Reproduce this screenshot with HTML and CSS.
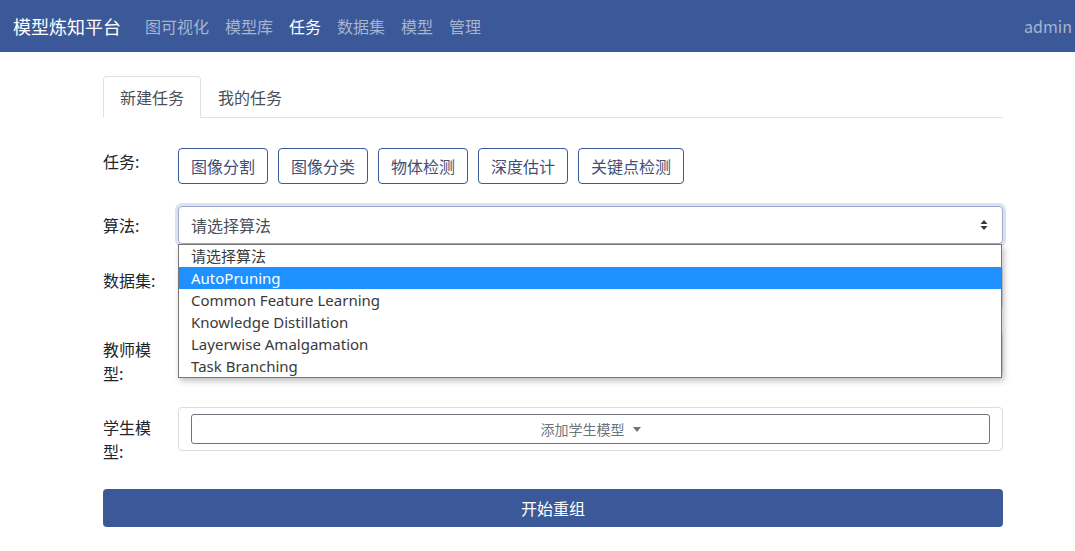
FILE: index.html
```html
<!DOCTYPE html>
<html lang="zh">
<head>
<meta charset="utf-8">
<title>模型炼知平台</title>
<link rel="stylesheet" href="styles.css">
</head>
<body>
<div class="page">
  <nav class="navbar">
    <div class="nav-left">
      <span class="brand">模型炼知平台</span>
      <a class="nav-link">图可视化</a>
      <a class="nav-link">模型库</a>
      <a class="nav-link active">任务</a>
      <a class="nav-link">数据集</a>
      <a class="nav-link">模型</a>
      <a class="nav-link">管理</a>
    </div>
    <a class="nav-link user">admin<span class="caret"></span></a>
  </nav>

  <main class="container">
    <div class="tabs">
      <div class="tab active">新建任务</div>
      <div class="tab">我的任务</div>
    </div>

    <div class="form">
      <div class="row row-task">
        <label class="label label-task">任务:</label>
        <div class="field task-buttons">
          <button class="btn-outline">图像分割</button>
          <button class="btn-outline">图像分类</button>
          <button class="btn-outline">物体检测</button>
          <button class="btn-outline">深度估计</button>
          <button class="btn-outline">关键点检测</button>
        </div>
      </div>

      <div class="row row-algo">
        <label class="label label-algo">算法:</label>
        <div class="field select-wrap">
          <div class="select">
            <span>请选择算法</span>
            <svg class="arrows" width="8" height="12" viewBox="0 0 8 12"><path d="M4 1 L7.5 5 H0.5 Z M4 11 L7.5 7 H0.5 Z" fill="#343a40"/></svg>
          </div>
          <ul class="dropdown">
            <li class="opt">请选择算法</li>
            <li class="opt selected">AutoPruning</li>
            <li class="opt">Common Feature Learning</li>
            <li class="opt">Knowledge Distillation</li>
            <li class="opt">Layerwise Amalgamation</li>
            <li class="opt">Task Branching</li>
          </ul>
        </div>
      </div>

      <div class="row row-data">
        <label class="label label-data">数据集:</label>
        <div class="field">
          <div class="box"><div class="add-btn">添加数据集<span class="caret dark"></span></div></div>
        </div>
      </div>

      <div class="row row-teacher">
        <label class="label label-teacher">教师模型:</label>
        <div class="field">
          <div class="box"><div class="add-btn">添加教师模型<span class="caret dark"></span></div></div>
        </div>
      </div>

      <div class="row row-student">
        <label class="label label-student">学生模型:</label>
        <div class="field">
          <div class="box"><div class="add-btn">添加学生模型<span class="caret dark"></span></div></div>
        </div>
      </div>

      <button class="submit">开始重组</button>
    </div>
  </main>
</div>
</body>
</html>
```

FILE: styles.css
```css
* { box-sizing: border-box; }

html, body {
  margin: 0;
  padding: 0;
  overflow: hidden;
  background: #fff;
}

body {
  font-family: "Noto Sans CJK SC", "Noto Sans", sans-serif;
  color: #212529;
  font-size: 16px;
  line-height: 24px;
}

.page {
  width: 1106px;
}

/* Navbar */
.navbar {
  height: 52px;
  background: #3b5998;
  display: flex;
  align-items: center;
  justify-content: space-between;
  padding: 0 20px 0 13px;
}

.nav-left {
  display: flex;
  align-items: center;
}

.brand {
  color: #fff;
  font-size: 18px;
  line-height: 24px;
  margin-right: 16px;
}

.nav-link {
  color: #a7b4d0;
  font-size: 16px;
  padding: 0 8px;
  line-height: 24px;
  text-decoration: none;
}

.nav-link.active { color: #fff; }

.user { display: flex; align-items: center; padding-right: 0; }

.caret {
  display: inline-block;
  width: 0;
  height: 0;
  margin-left: 6px;
  border-top: 5px solid currentColor;
  border-left: 4px solid transparent;
  border-right: 4px solid transparent;
}

.caret.dark { color: #6c757d; margin-left: 8px; vertical-align: middle; }

/* Container */
.container {
  width: 900px;
  margin: 24px auto 0;
}

.tabs {
  display: flex;
  border-bottom: 1px solid #dee2e6;
}

.tab {
  padding: 8px 16px;
  margin-bottom: -1px;
  border: 1px solid transparent;
  border-radius: 4px 4px 0 0;
  color: #495057;
  line-height: 24px;
}

.tab.active {
  border-color: #dee2e6 #dee2e6 #fff;
  background: #fff;
}

.form {
  margin-top: 30px;
}

.row {
  display: flex;
  align-items: flex-start;
}

.label {
  width: 75px;
  flex: 0 0 75px;
  padding-right: 15px;
  line-height: 24px;
  color: #212529;
}

.field {
  flex: 1;
  min-width: 0;
}

.row-task { margin-bottom: 22px; }
.label-task { padding-top: 1px; }

.task-buttons {
  display: flex;
  gap: 10px;
}

.btn-outline {
  font-family: inherit;
  font-size: 16px;
  line-height: 24px;
  height: 36px;
  padding: 5px 12px;
  background: #fff;
  border: 1px solid #3b5998;
  border-radius: 4px;
  color: #3f5077;
}

.row-algo { margin-bottom: 22px; align-items: center; }

.select-wrap { position: relative; }

.select {
  height: 38px;
  border: 1px solid #9aaad0;
  border-radius: 4px;
  box-shadow: 0 0 0 3px rgba(59, 89, 152, 0.18);
  display: flex;
  align-items: center;
  justify-content: space-between;
  padding: 0 12px 0 12px;
  color: #495057;
  font-size: 16px;
}

.arrows { margin-right: 2px; }

.dropdown {
  position: absolute;
  top: 38px;
  left: 0;
  width: 824px;
  margin: 0;
  padding: 0;
  list-style: none;
  background: #fff;
  border: 1px solid #767676;
  box-shadow: 2px 3px 6px rgba(0, 0, 0, 0.25);
  z-index: 10;
}

.opt {
  height: 22px;
  line-height: 22px;
  padding-left: 12px;
  font-family: "Noto Sans", "Noto Sans CJK SC", sans-serif;
  font-size: 15px;
  color: #3a3a3a;
}

.opt.selected {
  background: #1e90ff;
  color: #fff;
}

.row-data { margin-bottom: 22px; }
.label-data { padding-top: 2px; }

.row-teacher { margin-bottom: 22px; }
.label-teacher { padding-top: 5px; }

.row-student { margin-bottom: 26px; }
.label-student { padding-top: 8px; }

.box {
  border: 1px solid #dcdcdc;
  border-radius: 4px;
  padding: 6px 12px;
}

.add-btn {
  height: 30px;
  border: 1px solid #6c757d;
  border-radius: 3px;
  display: flex;
  align-items: center;
  justify-content: center;
  font-size: 14px;
  color: #6c757d;
}

.submit {
  display: block;
  width: 100%;
  height: 38px;
  border: none;
  border-radius: 4px;
  background: #3b5998;
  color: #fff;
  font-family: inherit;
  font-size: 16px;
  line-height: 24px;
}
```
